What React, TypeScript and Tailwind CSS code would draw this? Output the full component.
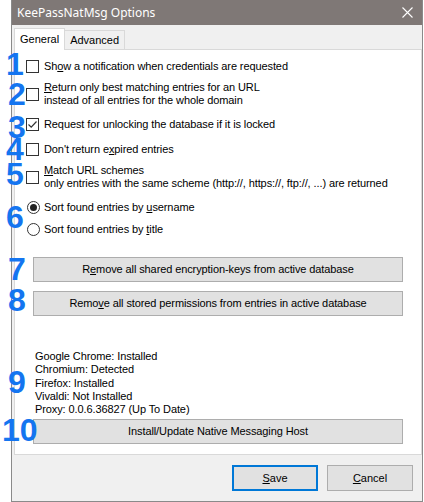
import React from "react";

const F = { fontFamily: '"Liberation Sans", Arial, sans-serif' } as const;

function CheckBox({ checked }: { checked?: boolean }) {
  return (
    <div className="w-[13px] h-[13px] border border-[#333333] bg-white shrink-0 flex items-center justify-center">
      {checked && (
        <svg width="11" height="11" viewBox="0 0 11 11">
          <path d="M1.5 5.5 L4.2 8.2 L9.5 2.5" fill="none" stroke="#333" strokeWidth="1.2" />
        </svg>
      )}
    </div>
  );
}

function Radio({ checked }: { checked?: boolean }) {
  return (
    <div className="w-[13px] h-[13px] rounded-full border border-[#333333] bg-white shrink-0 flex items-center justify-center">
      {checked && <div className="w-[7px] h-[7px] rounded-full bg-[#222222]" />}
    </div>
  );
}

function Btn({ children }: { children: React.ReactNode }) {
  return (
    <div className="ml-[18px] w-[370px] h-[25px] bg-[#e1e1e1] border border-[#adadad] flex items-center justify-center text-[11px] text-black">
      {children}
    </div>
  );
}

const nums: { n: string; l: number; t: number }[] = [
  { n: "1", l: 6, t: 48 },
  { n: "2", l: 8, t: 78 },
  { n: "3", l: 8, t: 111 },
  { n: "4", l: 6, t: 133 },
  { n: "5", l: 6, t: 158 },
  { n: "6", l: 6, t: 201 },
  { n: "7", l: 8, t: 253 },
  { n: "8", l: 8, t: 284 },
  { n: "9", l: 8, t: 366 },
  { n: "10", l: 2, t: 414 },
];

export default function App() {
  return (
    <div className="relative w-[424px] h-[502px] bg-white overflow-hidden" style={F}>
      <div className="ml-[11px] w-[412px] h-[502px] bg-[#f0f0f0] border-l border-r border-b border-[#8a8a8a] flex flex-col">
        {/* title bar */}
        <div className="h-[25px] bg-[#7f7876] flex items-center justify-between pl-[5px] pr-[9px] shrink-0">
          <span className="text-[12px] text-white" style={{ fontFamily: '"Noto Sans", "Open Sans", sans-serif' }}>
            KeePassNatMsg Options
          </span>
          <svg width="11" height="11" viewBox="0 0 11 11">
            <path d="M0.5 0.5 L10.5 10.5 M10.5 0.5 L0.5 10.5" stroke="#fff" strokeWidth="1.1" />
          </svg>
        </div>
        {/* tabs */}
        <div className="h-[24px] flex items-end pl-[2px] shrink-0">
          <div className="h-[22px] px-[5px] bg-white border border-b-0 border-[#d9d9d9] flex items-center text-[11px] text-black relative top-[1px] z-10">
            General
          </div>
          <div className="h-[19px] px-[5px] bg-[#f0f0f0] border border-l-0 border-b-0 border-[#d9d9d9] flex items-center text-[11px] text-black">
            Advanced
          </div>
        </div>
        {/* panel */}
        <div className="ml-[2px] w-[408px] h-[406px] bg-white border border-[#d9d9d9] flex flex-col pt-[8px] text-[11px] text-black leading-[13px] tracking-[-0.1px]">
          <div className="h-[16px] flex items-center pl-[11px] gap-[5px]">
            <CheckBox />
            <span>
              Sh<u>o</u>w a notification when credentials are requested
            </span>
          </div>
          <div className="mt-[6px] h-[28px] flex items-center pl-[11px] gap-[5px]">
            <CheckBox />
            <span>
              <u>R</u>eturn only best matching entries for an URL
              <br />
              instead of all entries for the whole domain
            </span>
          </div>
          <div className="mt-[8px] h-[16px] flex items-center pl-[11px] gap-[5px]">
            <CheckBox checked />
            <span>Request for unlocking the database if it is locked</span>
          </div>
          <div className="mt-[9px] h-[16px] flex items-center pl-[11px] gap-[5px]">
            <CheckBox />
            <span>
              Don't return e<u>x</u>pired entries
            </span>
          </div>
          <div className="mt-[6px] h-[28px] flex items-center pl-[11px] gap-[5px]">
            <CheckBox />
            <span>
              <u>M</u>atch URL schemes
              <br />
              only entries with the same scheme (http://, https://, ftp://, ...) are returned
            </span>
          </div>
          <div className="mt-[8px] h-[16px] flex items-center pl-[12px] gap-[4px]">
            <Radio checked />
            <span>
              Sort found entries by <u>u</u>sername
            </span>
          </div>
          <div className="mt-[6px] h-[16px] flex items-center pl-[12px] gap-[4px]">
            <Radio />
            <span>
              Sort found entries by <u>t</u>itle
            </span>
          </div>
          <div className="mt-[20px]">
            <Btn>
              <span>
                R<u>e</u>move all shared encryption-keys from active database
              </span>
            </Btn>
          </div>
          <div className="mt-[9px]">
            <Btn>
              <span>
                Remo<u>v</u>e all stored permissions from entries in active database
              </span>
            </Btn>
          </div>
          <div className="mt-[34px] pl-[20px] flex flex-col leading-[13.25px]">
            <span>Google Chrome: Installed</span>
            <span>Chromium: Detected</span>
            <span>Firefox: Installed</span>
            <span>Vivaldi: Not Installed</span>
            <span>Proxy: 0.0.6.36827 (Up To Date)</span>
          </div>
          <div className="mt-[3px]">
            <Btn>Install/Update Native Messaging Host</Btn>
          </div>
        </div>
        {/* bottom buttons */}
        <div className="flex justify-end gap-[9px] pr-[9px] pt-[10px]">
          <div className="w-[86px] h-[26px] bg-[#e1e1e1] border-2 border-[#0078d7] flex items-center justify-center text-[11px] text-black">
            <span>
              <u>S</u>ave
            </span>
          </div>
          <div className="w-[86px] h-[26px] bg-[#e1e1e1] border border-[#adadad] flex items-center justify-center text-[11px] text-black">
            <span>
              <u>C</u>ancel
            </span>
          </div>
        </div>
      </div>
      {nums.map((x) => (
        <div
          key={x.n}
          className="absolute text-[32px] leading-[32px] font-bold text-[#1475f0]"
          style={{ left: x.l, top: x.t }}
        >
          {x.n}
        </div>
      ))}
    </div>
  );
}
